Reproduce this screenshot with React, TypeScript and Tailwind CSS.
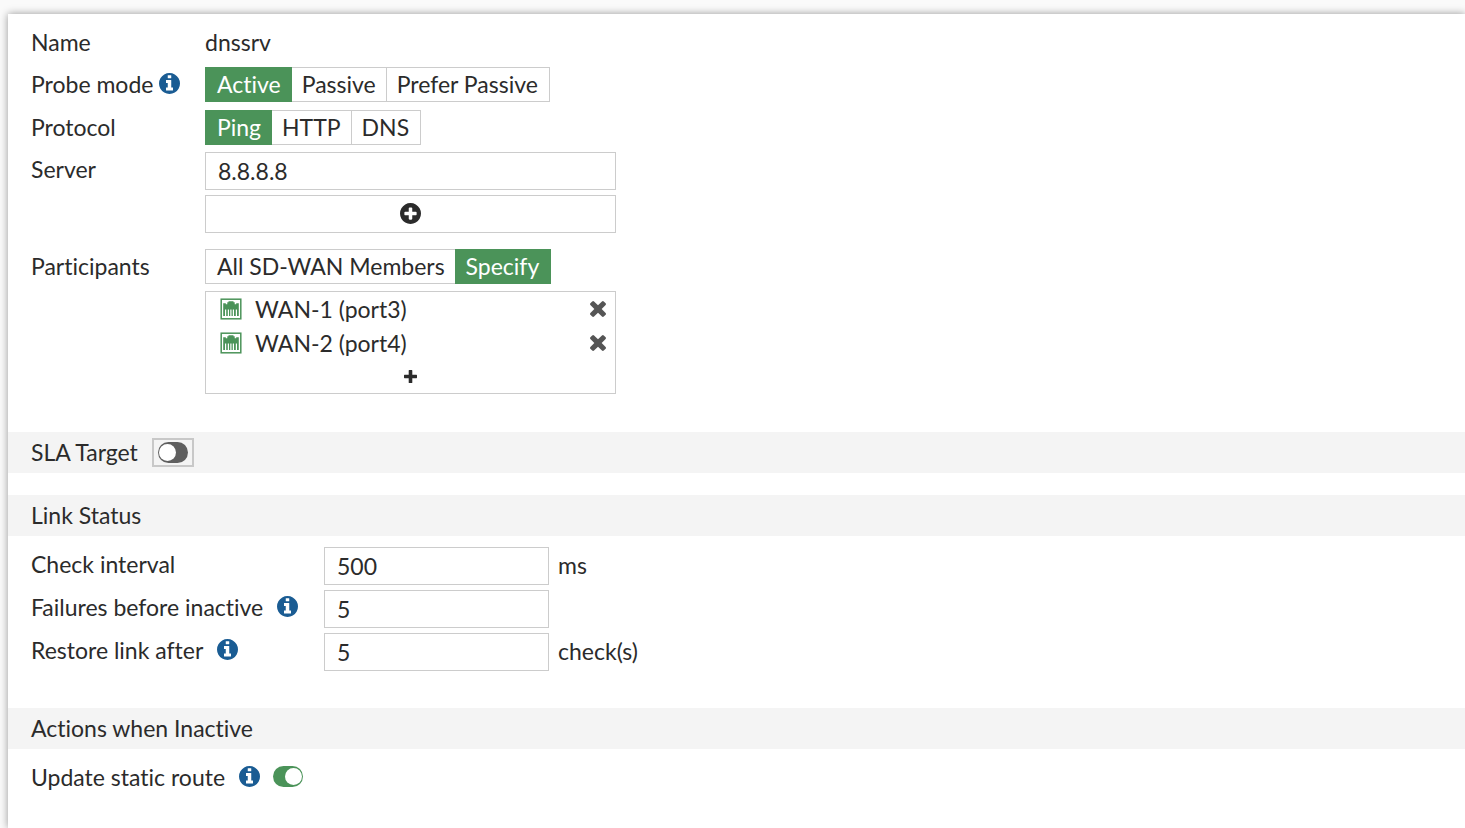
import { useState, type ReactNode } from "react";

function InfoIcon() {
  return (
    <svg viewBox="0 0 1536 1536" className="size-[21px] shrink-0 fill-[#1a5c93]" role="img" aria-label="Information">
      <path d="M1024 1248v-160q0-14-9-23t-23-9h-96v-512q0-14-9-23t-23-9h-320q-14 0-23 9t-9 23v160q0 14 9 23t23 9h96v320h-96q-14 0-23 9t-9 23v160q0 14 9 23t23 9h448q14 0 23-9t9-23zm-128-896v-160q0-14-9-23t-23-9h-192q-14 0-23 9t-9 23v160q0 14 9 23t23 9h192q14 0 23-9t9-23zm640 416q0 209-103 385.5t-279.5 279.5-385.5 103-385.5-103-279.5-279.5-103-385.5 103-385.5 279.5-279.5 385.5-103 385.5 103 279.5 279.5 103 385.5z" />
    </svg>
  );
}

function PlusCircleIcon() {
  return (
    <svg viewBox="0 0 1536 1536" className="size-[21px] fill-[#2b2b2b]" aria-hidden="true">
      <path d="M1216 832v-128q0-26-19-45t-45-19h-256v-256q0-26-19-45t-45-19h-128q-26 0-45 19t-19 45v256h-256q-26 0-45 19t-19 45v128q0 26 19 45t45 19h256v256q0 26 19 45t45 19h128q26 0 45-19t19-45v-256h256q26 0 45-19t19-45zm320-64q0 209-103 385.5t-279.5 279.5-385.5 103-385.5-103-279.5-279.5-103-385.5 103-385.5 279.5-279.5 385.5-103 385.5 103 279.5 279.5 103 385.5z" />
    </svg>
  );
}

function PlusIcon() {
  return (
    <svg viewBox="0 0 13 13" className="size-[13px] fill-[#2b2b2b]" aria-hidden="true">
      <path d="M5.3 0h2.4q.6 0 .6.6v4.200h4.100q.6 0 .6.6v2.200q0 .6-.6.6H8.300v4.200q0 .6-.6.6H5.300q-.6 0-.6-.6V8.200H.6q-.6 0-.6-.6V5.400q0-.6.6-.6h4.100V.6q0-.6.6-.6z" />
    </svg>
  );
}

function TimesIcon() {
  return (
    <svg viewBox="302 366 1188 1188" className="size-4 fill-[#555]" aria-hidden="true">
      <path d="M1490 1322q0 40-28 68l-136 136q-28 28-68 28t-68-28l-294-294-294 294q-28 28-68 28t-68-28l-136-136q-28-28-28-68t28-68l294-294-294-294q-28-28-28-68t28-68l136-136q28-28 68-28t68 28l294 294 294-294q28-28 68-28t68 28l136 136q28 28 28 68t-28 68l-294 294 294 294q28 28 28 68z" />
    </svg>
  );
}

function PortIcon() {
  return (
    <svg viewBox="0 0 22 22" className="size-[22px] shrink-0" aria-hidden="true">
      <rect x="1.2" y="1.2" width="19.6" height="19.6" fill="#fff" stroke="#4b9359" strokeWidth="1.500" />
      <path
        fill="#4b9359"
        d="M3.200 18V5.200H5.800V6.200H7.300V4.200H8.500V3.200H13.500V4.200H14.700V6.200H16.200V5.200H18.800V18H17V11.500H15.800V18H14V11.500H12.800V18H11.500V11.500H10.300V18H9V11.500H7.800V18H6.200V11.500H5V18z"
      />
    </svg>
  );
}

const inputClass =
  "block h-[38px] w-full border border-[#ccc] bg-white px-3 outline-none focus:border-[#4b9359]";

function Segmented({ name, label, options, initial }: { name: string; label: string; options: string[]; initial: string }) {
  const [value, setValue] = useState(initial);
  return (
    <fieldset aria-label={label} className="flex">
      {options.map((option) => (
        <label
          key={option}
          className="relative -ml-px flex h-[35px] cursor-pointer items-center border border-[#ccc] px-2.5 pb-0.5 first:ml-0 first:pl-[11px] last:pr-[11px] has-checked:z-10 has-checked:border-[#4b9359] has-checked:bg-[#4b9359] has-checked:text-white"
        >
          <input
            type="radio"
            name={name}
            value={option}
            checked={value === option}
            onChange={() => setValue(option)}
            className="absolute inset-0 cursor-pointer appearance-none"
          />
          {option}
        </label>
      ))}
    </fieldset>
  );
}

function Toggle({ label, initial = false }: { label: string; initial?: boolean }) {
  const [on, setOn] = useState(initial);
  return (
    <input
      type="checkbox"
      role="switch"
      aria-label={label}
      checked={on}
      onChange={() => setOn(!on)}
      className="flex h-[21px] w-[30px] shrink-0 cursor-pointer appearance-none items-center rounded-full bg-[#5f5f5f] px-px before:size-[17px] before:rounded-full before:bg-white checked:justify-end checked:bg-[#4b9359]"
    />
  );
}

function Row({ label, htmlFor, info, children }: { label: string; htmlFor?: string; info?: boolean; children: ReactNode }) {
  return (
    <div className="flex items-start">
      <div className="flex h-[33px] w-[174px] shrink-0 items-center gap-1.5">
        {htmlFor ? <label htmlFor={htmlFor}>{label}</label> : <span>{label}</span>}
        {info && <InfoIcon />}
      </div>
      {children}
    </div>
  );
}

function NumberRow({ id, label, value, unit, info }: { id: string; label: string; value: string; unit?: string; info?: boolean }) {
  return (
    <div className="flex items-start">
      <div className="flex h-[33px] w-[293px] shrink-0 items-center gap-3.5">
        <label htmlFor={id}>{label}</label>
        {info && <InfoIcon />}
      </div>
      <div className="flex items-center gap-[9px]">
        <div className="w-[225px]">
          <input id={id} type="text" inputMode="numeric" defaultValue={value} className={inputClass} />
        </div>
        {unit && <span className="pb-0.5">{unit}</span>}
      </div>
    </div>
  );
}

function SectionHeader({ title, children }: { title: string; children?: ReactNode }) {
  return (
    <div className="flex h-[41px] items-center gap-3.5 bg-[#f4f4f4] pl-[23px]">
      <h2 className="pb-0.5">{title}</h2>
      {children}
    </div>
  );
}

export default function App() {
  const [members, setMembers] = useState(["WAN-1 (port3)", "WAN-2 (port4)"]);
  return (
    <div className="flex min-h-screen flex-col overflow-hidden bg-[#fafafa] pt-[14px] pl-2 font-['Lato',sans-serif] text-[23px] leading-[34px] text-[#2b2b2b] [font-variant-ligatures:none]">
      <main className="grow bg-white pt-[11px] shadow-[0_0_8px_rgba(0,0,0,0.4)]">
        <div className="flex flex-col gap-2 pl-[23px]">
          <div className="flex flex-col gap-[7px]">
            <Row label="Name">
              <span className="flex h-[35px] items-center pb-0.5">dnssrv</span>
            </Row>
            <Row label="Probe mode" info>
              <Segmented name="probe" label="Probe mode" options={["Active", "Passive", "Prefer Passive"]} initial="Active" />
            </Row>
          </div>
          <div className="flex flex-col gap-[7px]">
            <Row label="Protocol">
              <Segmented name="protocol" label="Protocol" options={["Ping", "HTTP", "DNS"]} initial="Ping" />
            </Row>
            <Row label="Server" htmlFor="server">
              <div className="flex w-[411px] flex-col gap-[5px]">
                <input id="server" type="text" defaultValue="8.8.8.8" className={inputClass} />
                <button type="button" aria-label="Add server" className="flex h-[38px] items-center justify-center border border-[#ccc] pb-0.5">
                  <PlusCircleIcon />
                </button>
              </div>
            </Row>
          </div>
          <div className="pt-2">
            <Row label="Participants">
              <div className="flex w-[411px] flex-col gap-[7px]">
                <Segmented name="participants" label="Participants" options={["All SD-WAN Members", "Specify"]} initial="Specify" />
                <div className="border border-[#ccc]">
                  <ul>
                    {members.map((member) => (
                      <li key={member} className="flex h-[34px] items-center gap-[13px] pr-[9px] pl-[14px]">
                        <PortIcon />
                        <span className="grow">{member}</span>
                        <button type="button" aria-label={`Remove ${member}`} onClick={() => setMembers(members.filter((m) => m !== member))}>
                          <TimesIcon />
                        </button>
                      </li>
                    ))}
                  </ul>
                  <button type="button" aria-label="Add member" className="flex h-[33px] w-full items-center justify-center">
                    <PlusIcon />
                  </button>
                </div>
              </div>
            </Row>
          </div>
        </div>

        <section className="pt-[38px]">
          <SectionHeader title="SLA Target">
            <span className="flex h-[29px] w-[42px] items-center justify-center border-2 border-[#c8c8c8]">
              <Toggle label="SLA Target" />
            </span>
          </SectionHeader>
        </section>

        <section className="pt-[22px]">
          <SectionHeader title="Link Status" />
          <div className="flex flex-col gap-[5px] pt-[11px] pl-[23px]">
            <NumberRow id="interval" label="Check interval" value="500" unit="ms" />
            <NumberRow id="failures" label="Failures before inactive" value="5" info />
            <NumberRow id="restore" label="Restore link after" value="5" unit="check(s)" info />
          </div>
        </section>

        <section className="pt-[37px]">
          <SectionHeader title="Actions when Inactive" />
          <div className="flex items-center pt-[11px] pl-[23px]">
            <div className="flex h-[33px] items-center gap-3.5">
              <span>Update static route</span>
              <InfoIcon />
            </div>
            <div className="pl-[13px]">
              <Toggle label="Update static route" initial />
            </div>
          </div>
        </section>
      </main>
    </div>
  );
}
